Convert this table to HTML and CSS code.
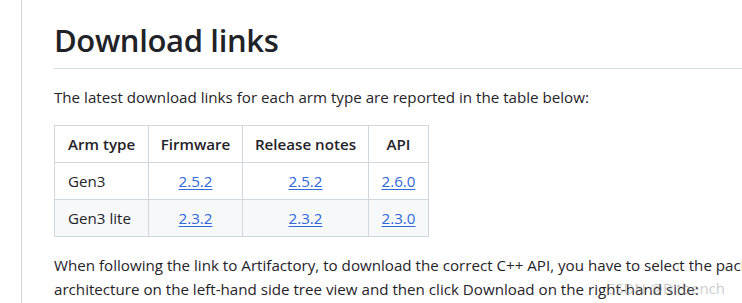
FILE: index.html
```html
<!DOCTYPE html>
<html lang="en">
<head>
<meta charset="utf-8">
<title>Download links</title>
<link rel="stylesheet" href="styles.css">
</head>
<body>
<div class="page">
  <div class="article">
    <h1 class="title">Download links</h1>
    <p class="text">The latest download links for each arm type are reported in the table below:</p>
    <table class="links">
      <colgroup>
        <col class="c1"><col class="c2"><col class="c3"><col class="c4">
      </colgroup>
      <thead>
        <tr><th class="left">Arm type</th><th>Firmware</th><th>Release notes</th><th>API</th></tr>
      </thead>
      <tbody>
        <tr><td class="left">Gen3</td><td><a href="#">2.5.2</a></td><td><a href="#">2.5.2</a></td><td><a href="#">2.6.0</a></td></tr>
        <tr class="alt"><td class="left">Gen3 lite</td><td><a href="#">2.3.2</a></td><td><a href="#">2.3.2</a></td><td><a href="#">2.3.0</a></td></tr>
      </tbody>
    </table>
    <p class="text after">When following the link to Artifactory, to download the correct C++ API, you have to select the package matching your<br>architecture on the left-hand side tree view and then click Download on the right-hand side:</p>
  </div>
  <div class="watermark">CSDN @Bitbench</div>
</div>
</body>
</html>
```
FILE: styles.css
```css
html, body {
  margin: 0;
  padding: 0;
  background: #ffffff;
  overflow: hidden;
}
body {
  font-family: "Open Sans", "Noto Sans", sans-serif;
  color: #1f2328;
  font-size: 15.15px;
  line-height: 24px;
}
.page {
  position: relative;
  margin-left: 21px;
  border-left: 1px solid #d0d7de;
  height: 303px;
  padding-left: 32px;
  overflow: hidden;
}
.article {
  padding-top: 20px;
  width: 800px;
}
.title {
  margin: 0;
  font-size: 31px;
  font-weight: 600;
  line-height: 40px;
  letter-spacing: -0.35px;
  padding-bottom: 8px;
  border-bottom: 1px solid #d8dee4;
}
.text {
  margin: 16px 0 0;
}
.links {
  margin-top: 16px;
  border-collapse: collapse;
  table-layout: fixed;
  width: 375px;
}
.links .c1 { width: 94px; }
.links .c2 { width: 94px; }
.links .c3 { width: 126px; }
.links .c4 { width: 60px; }
.links th, .links td {
  border: 1px solid #d0d7de;
  padding: 6px 0;
  text-align: center;
  line-height: 24px;
  white-space: nowrap;
}
.links th {
  font-weight: 600;
}
.links .left {
  text-align: left;
  padding-left: 13px;
}
.links .alt td {
  background: #f6f8fa;
}
.links a {
  color: #3068d8;
  text-decoration: underline;
  text-underline-offset: 2px;
}
.after {
  white-space: nowrap;
}
.watermark {
  position: absolute;
  right: 17px;
  bottom: 3px;
  font-size: 15px;
  color: rgba(150, 150, 150, 0.5);
}
```
